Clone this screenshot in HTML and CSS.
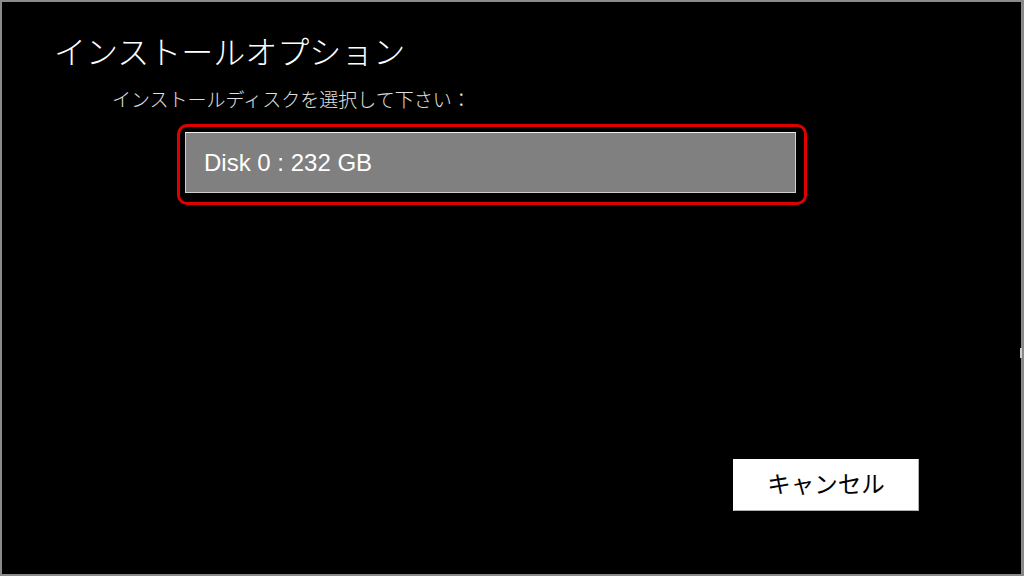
FILE: index.html
```html
<!DOCTYPE html>
<html lang="ja">
<head>
<meta charset="utf-8">
<title>インストールオプション</title>
<link rel="stylesheet" href="styles.css">
</head>
<body>
<div class="screen">
  <h1 class="title">インストールオプション</h1>
  <p class="prompt">インストールディスクを選択して下さい：</p>
  <div class="disk-highlight">
    <div class="disk-item">Disk 0 : 232 GB</div>
  </div>
  <div class="actions">
    <button class="cancel">キャンセル</button>
  </div>
  <span class="edge-mark"></span>
</div>
</body>
</html>
```
FILE: styles.css
```css
html, body {
  margin: 0;
  padding: 0;
  background: #000;
}
.screen {
  position: relative;
  box-sizing: border-box;
  width: 1024px;
  height: 576px;
  background: #000;
  border: 2px solid #8a8a8a;
  border-right-width: 3px;
  display: flex;
  flex-direction: column;
  font-family: "Noto Sans CJK JP", "Liberation Sans", sans-serif;
  color: #fff;
}
.title {
  margin: 28px 0 0 52px;
  font-size: 32px;
  font-weight: 300;
  line-height: 40px;
  color: #fff;
}
.prompt {
  margin: 17px 0 0 110px;
  font-size: 19px;
  line-height: 24px;
  font-weight: 300;
  color: #e0e0e0;
}
.disk-highlight {
  margin: 13px 0 0 175px;
  width: 630px;
  height: 81px;
  box-sizing: border-box;
  border: 3px solid #e00000;
  border-radius: 10px;
  padding: 5px 8px 0 5px;
}
.disk-item {
  box-sizing: border-box;
  height: 61px;
  background: #808080;
  border: 1px solid #d0d0d0;
  border-top-color: #f0f0f0;
  padding-left: 18px;
  display: flex;
  align-items: center;
  font-family: "Liberation Sans", sans-serif;
  font-size: 24px;
  color: #fff;
}
.actions {
  margin-top: auto;
  margin-bottom: 63px;
  display: flex;
  justify-content: flex-end;
  padding-right: 102px;
}
.cancel {
  width: 186px;
  height: 52px;
  background: #fff;
  border: 1px solid #fff;
  border-right-color: #b0b0b0;
  border-bottom-color: #b0b0b0;
  font-family: "Noto Sans CJK JP", sans-serif;
  font-size: 23.5px;
  color: #000;
  padding: 0 0 4px 0;
}
.edge-mark {
  position: absolute;
  right: -1px;
  top: 346px;
  width: 2px;
  height: 10px;
  background: #ccc;
}
```
